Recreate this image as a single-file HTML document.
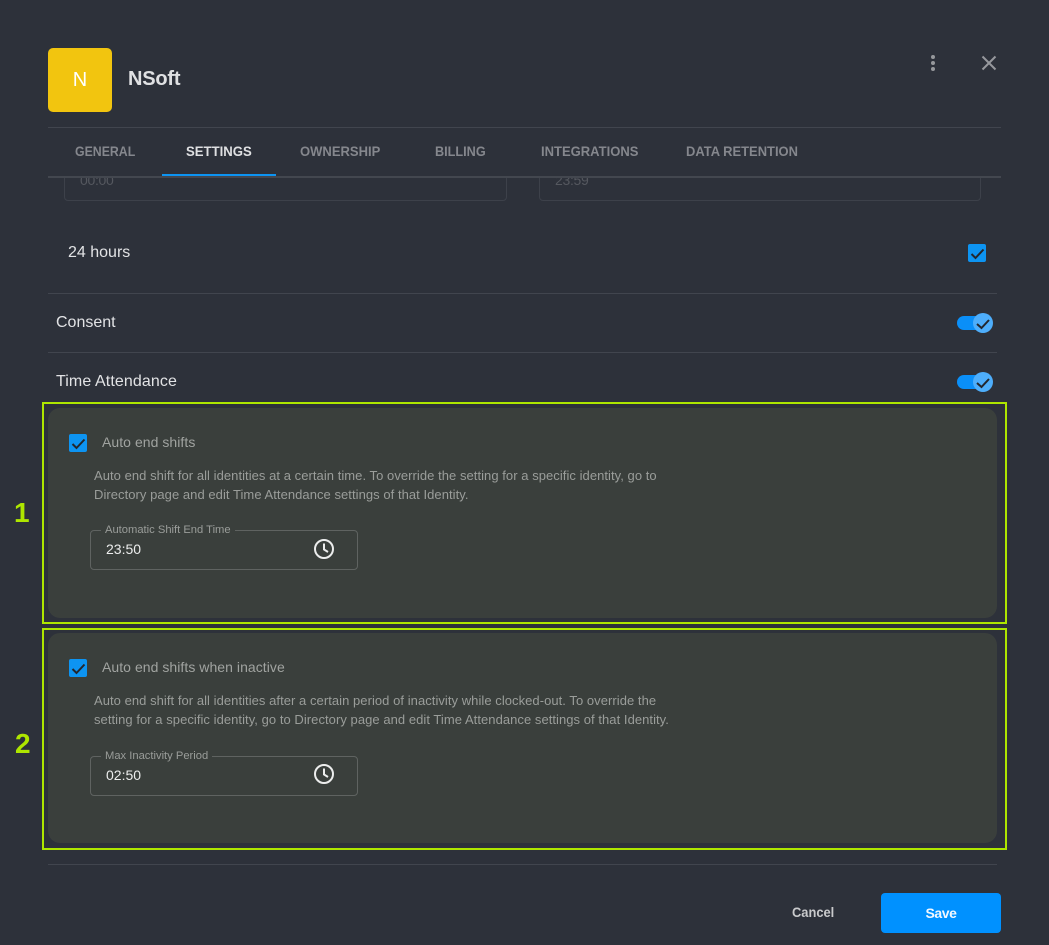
<!DOCTYPE html>
<html>
<head>
<meta charset="utf-8">
<style>
html,body{margin:0;padding:0;background:#2d313a;}
body{width:1049px;height:945px;position:relative;overflow:hidden;font-family:"Liberation Sans",sans-serif;}
.a{position:absolute;white-space:nowrap;}
.line{position:absolute;height:1px;background:#41454e;}
.tab{position:absolute;top:143px;font-size:14px;line-height:16px;color:#85878d;white-space:nowrap;font-weight:bold;transform-origin:0 0;}
.panel{position:absolute;left:48px;width:949px;height:210px;background:#3a3f3c;border-radius:12px;}
.green{position:absolute;left:42px;width:961px;height:218px;border:2px solid #aee600;}
.cb{position:absolute;width:18px;height:18px;background:#0d94f2;border-radius:2px;}
.cb svg{position:absolute;left:0;top:0;}
.ck{fill:none;stroke:#23262d;stroke-width:2;}
.title{position:absolute;left:102px;font-size:14px;line-height:18px;color:#a0a3a0;white-space:nowrap;letter-spacing:.05px;}
.desc{position:absolute;left:94px;font-size:13px;line-height:19px;color:#9a9d9a;white-space:nowrap;letter-spacing:.05px;}
.field{position:absolute;left:90px;width:266px;height:38px;border:1px solid #5f6361;border-radius:4px;}
.legend{position:absolute;left:101px;padding:0 4px;background:#3a3f3c;font-size:11.2px;line-height:12px;color:#9a9d9a;white-space:nowrap;}
.val{position:absolute;left:106px;font-size:14px;line-height:18px;color:#eceded;}
.sw{position:absolute;left:957px;width:36px;height:22px;}
.num{position:absolute;font-size:28px;line-height:30px;font-weight:bold;color:#aee600;}
</style>
</head>
<body>
<!-- Header -->
<div class="a" style="left:48px;top:48px;width:64px;height:64px;background:#f2c50f;border-radius:5px;color:#fff;font-size:20px;line-height:64px;text-align:center;">N</div>
<div class="a" style="left:128px;top:67px;font-size:20px;line-height:24px;font-weight:bold;color:#e0e1e3;letter-spacing:-.2px;">NSoft</div>
<svg class="a" style="left:925px;top:53px;" width="16" height="20"><circle cx="8" cy="4" r="2" fill="#96989c"/><circle cx="8" cy="10" r="2" fill="#96989c"/><circle cx="8" cy="16" r="2" fill="#96989c"/></svg>
<svg class="a" style="left:979px;top:53px;" width="20" height="20"><path d="M3.500 3.500L16.500 16.500M16.500 3.500L3.500 16.500" stroke="#96989c" stroke-width="2" fill="none"/></svg>

<div class="line" style="left:48px;top:127px;width:953px;"></div>

<!-- Background fields (scrolled under tabs) -->
<div class="a" style="left:64px;top:169px;width:441px;height:30px;border:1px solid #3d414a;border-radius:4px;"></div>
<div class="a" style="left:539px;top:169px;width:440px;height:30px;border:1px solid #3d414a;border-radius:4px;"></div>
<div class="a" style="left:80px;top:172px;font-size:14px;line-height:16px;color:#55585f;letter-spacing:-.3px;">00:00</div>
<div class="a" style="left:555px;top:172px;font-size:14px;line-height:16px;color:#55585f;letter-spacing:-.3px;">23:59</div>
<div class="a" style="left:0;top:128px;width:1049px;height:48px;background:#2d313a;"></div>

<!-- Tabs -->
<div class="tab" style="left:75px;transform:scaleX(.88);">GENERAL</div>
<div class="tab" style="left:186px;color:#dfe0e2;transform:scaleX(.94);">SETTINGS</div>
<div class="tab" style="left:300px;transform:scaleX(.93);">OWNERSHIP</div>
<div class="tab" style="left:435px;transform:scaleX(.905);">BILLING</div>
<div class="tab" style="left:541px;transform:scaleX(.93);">INTEGRATIONS</div>
<div class="tab" style="left:686px;transform:scaleX(.925);">DATA RETENTION</div>
<div class="a" style="left:48px;top:176px;width:953px;height:2px;background:#43474f;"></div>
<div class="a" style="left:162px;top:174px;width:114px;height:2px;background:#0d94f2;"></div>

<!-- Rows -->
<div class="a" style="left:68px;top:243px;font-size:16px;line-height:19px;color:#e2e3e5;">24 hours</div>
<div class="cb" style="left:968px;top:244px;"><svg width="18" height="18"><path class="ck" d="M3.500 10L7.500 14L15.500 5.500"/></svg></div>
<div class="line" style="left:48px;top:293px;width:949px;"></div>
<div class="a" style="left:56px;top:313px;font-size:16px;line-height:19px;color:#e2e3e5;">Consent</div>
<svg class="sw" style="top:312px;" width="36" height="22"><rect x="0" y="4" width="28" height="14" rx="7" fill="#0a8ff8"/><circle cx="26" cy="11" r="10" fill="#4eaefb"/><path class="ck" d="M20 12L24.500 16L32 8"/></svg>
<div class="line" style="left:48px;top:352px;width:949px;"></div>
<div class="a" style="left:56px;top:372px;font-size:16px;line-height:19px;color:#e2e3e5;letter-spacing:.1px;">Time Attendance</div>
<svg class="sw" style="top:371px;" width="36" height="22"><rect x="0" y="4" width="28" height="14" rx="7" fill="#0a8ff8"/><circle cx="26" cy="11" r="10" fill="#4eaefb"/><path class="ck" d="M20 12L24.500 16L32 8"/></svg>

<!-- Panel 1 -->
<div class="panel" style="top:408px;"></div>
<div class="green" style="top:402px;"></div>
<div class="num" style="left:14px;top:498px;">1</div>
<div class="cb" style="left:69px;top:434px;"><svg width="18" height="18"><path class="ck" d="M3.500 10L7.500 14L15.500 5.500"/></svg></div>
<div class="title" style="top:433px;">Auto end shifts</div>
<div class="desc" style="top:466px;">Auto end shift for all identities at a certain time. To override the setting for a specific identity, go to<br>Directory page and edit Time Attendance settings of that Identity.</div>
<div class="field" style="top:530px;"></div>
<div class="legend" style="top:524px;">Automatic Shift End Time</div>
<div class="val" style="top:540px;">23:50</div>
<svg class="a" style="left:313px;top:538px;" width="22" height="22"><circle cx="11" cy="11" r="9" stroke="#eceded" stroke-width="2" fill="none"/><path d="M11 5.500V11.500L15 14" stroke="#eceded" stroke-width="2" fill="none"/></svg>

<!-- Panel 2 -->
<div class="panel" style="top:633px;"></div>
<div class="green" style="top:628px;"></div>
<div class="num" style="left:15px;top:729px;">2</div>
<div class="cb" style="left:69px;top:659px;"><svg width="18" height="18"><path class="ck" d="M3.500 10L7.500 14L15.500 5.500"/></svg></div>
<div class="title" style="top:658px;">Auto end shifts when inactive</div>
<div class="desc" style="top:691px;">Auto end shift for all identities after a certain period of inactivity while clocked-out. To override the<br>setting for a specific identity, go to Directory page and edit Time Attendance settings of that Identity.</div>
<div class="field" style="top:756px;"></div>
<div class="legend" style="top:750px;">Max Inactivity Period</div>
<div class="val" style="top:766px;">02:50</div>
<svg class="a" style="left:313px;top:763px;" width="22" height="22"><circle cx="11" cy="11" r="9" stroke="#eceded" stroke-width="2" fill="none"/><path d="M11 5.500V11.500L15 14" stroke="#eceded" stroke-width="2" fill="none"/></svg>

<div class="line" style="left:48px;top:864px;width:949px;"></div>

<!-- Footer -->
<div class="a" style="left:792px;top:904px;font-size:14px;line-height:16px;color:#c9cacc;font-weight:bold;transform-origin:0 0;transform:scaleX(.92);">Cancel</div>
<div class="a" style="left:881px;top:893px;width:120px;height:40px;background:#0091ff;border-radius:4px;color:#f2f8ff;font-size:14px;line-height:40px;text-align:center;font-weight:bold;letter-spacing:-.4px;">Save</div>
</body>
</html>
